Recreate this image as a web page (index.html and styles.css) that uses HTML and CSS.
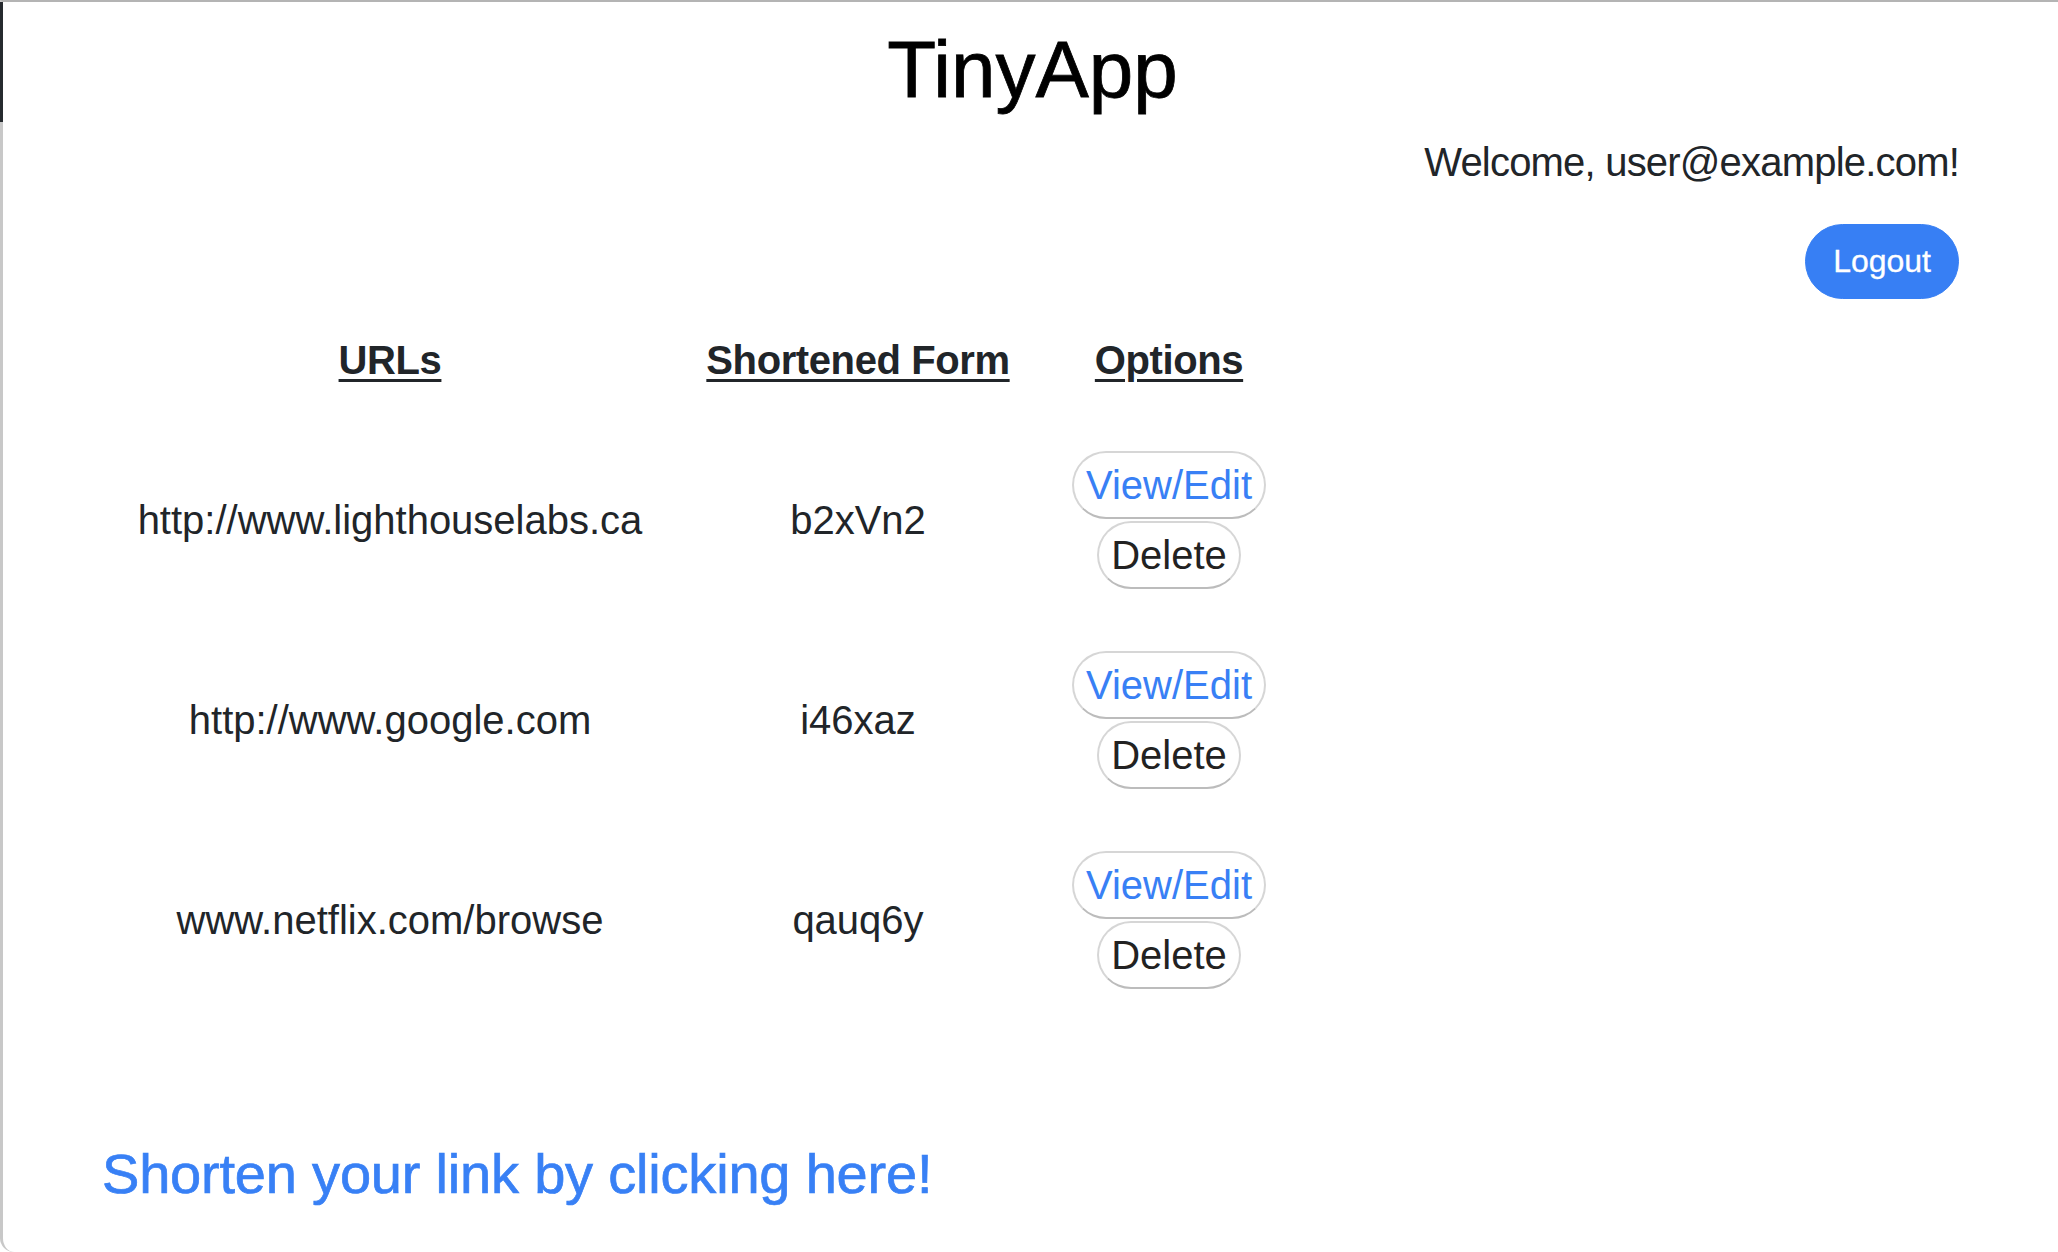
FILE: index.html
```html
<!DOCTYPE html>
<html lang="en">
<head>
<meta charset="utf-8">
<title>TinyApp</title>
<link rel="stylesheet" href="styles.css">
</head>
<body>
<div class="frame">
  <div class="container">
    <h1 class="title">TinyApp</h1>
    <div class="user-bar">
      <p class="welcome">Welcome, user@example.com!</p>
      <button class="btn-logout">Logout</button>
    </div>
    <div class="url-table">
      <div class="th"><u>URLs</u></div>
      <div class="th"><u>Shortened Form</u></div>
      <div class="th"><u>Options</u></div>

      <div class="td">http://www.lighthouselabs.ca</div>
      <div class="td">b2xVn2</div>
      <div class="td options">
        <button class="btn-pill btn-view">View/Edit</button>
        <button class="btn-pill btn-delete">Delete</button>
      </div>

      <div class="td">http://www.google.com</div>
      <div class="td">i46xaz</div>
      <div class="td options">
        <button class="btn-pill btn-view">View/Edit</button>
        <button class="btn-pill btn-delete">Delete</button>
      </div>

      <div class="td">www.netflix.com/browse</div>
      <div class="td">qauq6y</div>
      <div class="td options">
        <button class="btn-pill btn-view">View/Edit</button>
        <button class="btn-pill btn-delete">Delete</button>
      </div>
    </div>
    <h3 class="shorten"><a href="#">Shorten your link by clicking here!</a></h3>
  </div>
</div>
</body>
</html>
```

FILE: styles.css
```css
html, body {
  margin: 0;
  padding: 0;
  background: #ffffff;
}

body {
  font-family: "Liberation Sans", Arial, Helvetica, sans-serif;
  color: #212529;
  overflow: hidden;
}

.frame {
  position: relative;
  box-sizing: border-box;
  height: 1252px;
  border-top: 2px solid #b4b4b4;
  border-left: 3px solid #c8c8c8;
  border-bottom-left-radius: 14px;
}

.frame::before {
  content: "";
  position: absolute;
  left: -3px;
  top: 0;
  width: 3px;
  height: 120px;
  background: #262a2f;
}

.container {
  padding: 0 99px 0 99px;
}

.title {
  margin: 20px 0 0;
  font-size: 80px;
  line-height: 96px;
  font-weight: 400;
  text-align: center;
  color: #000000;
  -webkit-text-stroke: 0.8px #000000;
  padding-left: 4px;
}

.user-bar {
  display: flex;
  flex-direction: column;
  align-items: flex-end;
}

.welcome {
  margin: 14px 0 0;
  font-size: 40px;
  line-height: 60px;
  letter-spacing: -0.8px;
  color: #212529;
}

.btn-logout {
  margin-top: 32px;
  font-family: inherit;
  font-size: 32px;
  line-height: 48px;
  padding: 12px 27px 13px;
  border: 1px solid #377ff4;
  border-radius: 38px;
  background: #377ff4;
  color: #ffffff;
  -webkit-text-stroke: 0.3px #ffffff;
}

.url-table {
  display: grid;
  grid-template-columns: 582px 354px 268px;
  grid-template-rows: 90px 200px 200px 200px;
  margin-top: 31px;
  margin-left: -3px;
}

.th {
  font-size: 40px;
  line-height: 60px;
  font-weight: 700;
  text-align: center;
  color: #212529;
  letter-spacing: -0.4px;
}

.th u {
  text-decoration-thickness: 3px;
  text-underline-offset: 5px;
}

.td {
  display: flex;
  align-items: center;
  justify-content: center;
  font-size: 40px;
  line-height: 60px;
  color: #212529;
}

.options {
  flex-direction: column;
  gap: 2px;
}

.btn-pill {
  font-family: inherit;
  font-size: 40px;
  line-height: 44px;
  padding: 10px 12px;
  background: #ffffff;
  border: 2px solid #d6d6d6;
  border-bottom-color: #bcbcbc;
  border-radius: 34px;
}

.btn-view {
  color: #3880f5;
}

.btn-delete {
  color: #222222;
}

.shorten {
  margin: 120px 0 0;
  font-size: 56px;
  line-height: 67px;
  font-weight: 400;
  letter-spacing: -0.2px;
}

.shorten a {
  color: #3880f5;
  text-decoration: none;
  -webkit-text-stroke: 0.7px #3880f5;
}
```
